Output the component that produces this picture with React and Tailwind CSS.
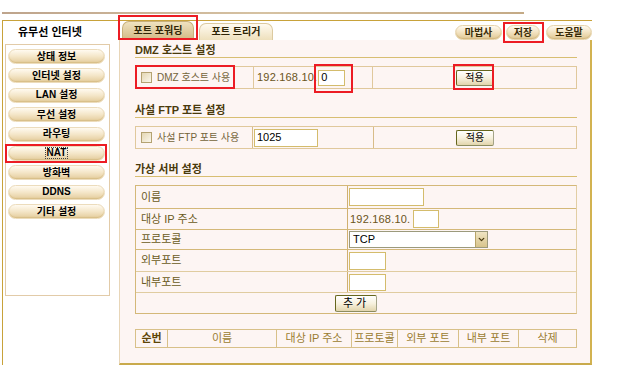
import { ChevronDown } from 'lucide-react'

const MENU = ['상태 정보', '인터넷 설정', 'LAN 설정', '무선 설정', '라우팅', 'NAT', '방화벽', 'DDNS', '기타 설정']

function SideButton({ label, active }) {
  return (
    <div className="h-[15px] w-[97px] ml-[2px] rounded-full border border-[#ecdcbc] bg-gradient-to-b from-[#fffaf0] via-[#f4e6c8] to-[#e4cc9c] shadow-[inset_0_-1px_1px_#d8bf88] flex items-center justify-center text-[10px] font-bold leading-none text-black">
      <span className={active ? 'outline outline-1 outline-dotted outline-[#444] px-px' : ''}>{label}</span>
    </div>
  )
}

function PillButton({ label, className }) {
  return (
    <div className={`h-[15px] rounded-full border border-[#e6d4ac] bg-gradient-to-b from-[#fffaf0] via-[#f2e2c0] to-[#e0c894] shadow-[inset_0_-1px_1px_#d4b980] flex items-center justify-center text-[10px] font-bold leading-none text-[#3a2c08] ${className}`}>
      {label}
    </div>
  )
}

function Check() {
  return <span className="inline-block w-[11px] h-[11px] border border-[#b4a272] bg-gradient-to-br from-[#e4d6b4] to-[#fbf7ec]" />
}

function Btn({ children, className }) {
  return (
    <div className={`flex items-center justify-center rounded-[2px] border border-[#66661c] border-r-[#a4a488] border-b-[#8c8c60] bg-gradient-to-b from-white via-[#f7f1de] to-[#e2d5ac] text-[10px] leading-none text-black ${className}`}>
      {children}
    </div>
  )
}

function TextBox({ value, className }) {
  return (
    <div className={`border border-[#d4bc6c] bg-white text-[11px] leading-none text-black flex items-center pl-[2px] ${className}`}>
      {value}
    </div>
  )
}

function SectionTitle({ children, className }) {
  return (
    <div className={`text-[11px] font-bold leading-[13px] text-[#4a3a0c] border-b border-[#d8be72] ${className}`}>
      {children}
    </div>
  )
}

const HEAD = [
  { label: '순번', w: 'w-[32px]', strong: true },
  { label: '이름', w: 'w-[109px]' },
  { label: '대상 IP 주소', w: 'w-[75px]' },
  { label: '프로토콜', w: 'w-[46px]' },
  { label: '외부 포트', w: 'w-[61px]' },
  { label: '내부 포트', w: 'w-[60px]' },
]

export default function App() {
  return (
    <div className="w-[622px] h-[375px] bg-white relative overflow-hidden font-['Liberation_Sans','Noto_Sans_CJK_KR',sans-serif] text-[10px]">
      {/* top strip */}
      <div className="pt-[12px] pl-[2px]">
        <div className="w-[522px] h-[2px] bg-gradient-to-r from-[#bea48c] via-[#d6c2a2] to-[#c4aa86]" />
      </div>
      <div className="mt-[6px] ml-[2px] w-[590px] h-px bg-[#c8a23a]" />

      <div className="ml-[2px] flex h-[344px] border-l border-[#c8a23a]">
        {/* sidebar */}
        <aside className="w-[116px] flex flex-col">
          <div className="h-[23px] flex items-center pl-[15px] text-[11px] font-bold text-black">유무선 인터넷</div>
          <div className="ml-[2px] w-[105px] h-[252px] border border-[#e2cba8] pt-[4px] flex flex-col gap-[4.4px]">
            {MENU.map(m => (
              <SideButton key={m} label={m} active={m === 'NAT'} />
            ))}
          </div>
        </aside>

        {/* main */}
        <main className="w-[473px] flex flex-col">
          <div className="h-[19px] flex items-end">
            <div className="ml-[3px] w-[72px] h-[19px] rounded-t-[7px] border border-b-0 border-[#c8b07a] bg-gradient-to-b from-[#efe2c0] to-[#d2b984] flex items-center justify-center text-[10px] font-bold text-[#2e2406] leading-none">포트 포워딩</div>
            <div className="ml-[5px] w-[74px] h-[17px] rounded-t-[7px] border border-b-0 border-[#dccaa0] bg-gradient-to-b from-[#fffaf0] to-[#eee0bc] flex items-center justify-center text-[10px] font-bold text-[#2e2406] leading-none">포트 트리거</div>
            <div className="ml-auto flex items-end">
              <PillButton label="마법사" className="w-[47px]" />
              <PillButton label="저장" className="w-[34px] ml-[4px]" />
              <PillButton label="도움말" className="w-[46px] ml-[6px]" />
            </div>
          </div>

          <div className="flex-1 bg-[#fdf5f3] border-l border-[#e8d6b8] border-r-2 border-r-[#d2b250] border-b-2 border-b-[#c9aa4c] pt-[4px] pl-[15px]">
            <div className="w-[442px]">
              {/* DMZ */}
              <SectionTitle>DMZ 호스트 설정</SectionTitle>
              <div className="mt-[8px] h-[23px] flex border border-[#e0c89c]">
                <div className="w-[118px] border-r border-[#e0c89c] flex items-center pl-[5px] gap-[5px] text-[10px] text-[#74643a]">
                  <Check />
                  <span>DMZ 호스트 사용</span>
                </div>
                <div className="w-[119px] border-r border-[#e0c89c] flex items-center pl-[3px] text-[11px] text-[#6a5420]">
                  <span className="tracking-[0.2px]">192.168.10.</span>
                  <TextBox value="0" className="ml-[1px] w-[27px] h-[16px]" />
                </div>
                <div className="flex-1 flex items-center justify-center">
                  <Btn className="w-[38px] h-[16px]">적용</Btn>
                </div>
              </div>

              {/* FTP */}
              <SectionTitle className="mt-[15px]">사설 FTP 포트 설정</SectionTitle>
              <div className="mt-[8px] h-[23px] flex border border-[#e0c89c]">
                <div className="w-[117px] border-r border-[#d8bc88] flex items-center pl-[5px] gap-[5px] text-[10px] text-[#74643a]">
                  <Check />
                  <span>사설 FTP 포트 사용</span>
                </div>
                <div className="w-[121px] border-r border-[#d8bc88] flex items-center pl-px">
                  <TextBox value="1025" className="w-[64px] h-[18px]" />
                </div>
                <div className="flex-1 flex items-center justify-center">
                  <Btn className="w-[38px] h-[16px]">적용</Btn>
                </div>
              </div>

              {/* virtual server */}
              <SectionTitle className="mt-[14px]">가상 서버 설정</SectionTitle>
              <div className="mt-[8px] border border-[#d4b878] border-r-[#e2cea4] text-[11px] text-[#6a5a22]">
                <div className="h-[23px] flex border-b border-[#d4b878]">
                  <div className="w-[212px] border-r border-[#d0b070] flex items-center pl-[5px]">이름</div>
                  <div className="flex items-center pl-px"><TextBox value="" className="w-[75px] h-[18px]" /></div>
                </div>
                <div className="h-[21px] flex border-b border-[#d4b878]">
                  <div className="w-[212px] border-r border-[#d0b070] flex items-center pl-[5px]">대상 IP 주소</div>
                  <div className="flex items-center pl-[2px] text-[#6a5420]">
                    <span className="tracking-[0.2px]">192.168.10.</span>
                    <TextBox value="" className="ml-[3px] w-[26px] h-[18px]" />
                  </div>
                </div>
                <div className="h-[20px] flex border-b border-[#d4b878]">
                  <div className="w-[212px] border-r border-[#d0b070] flex items-center pl-[5px]">프로토콜</div>
                  <div className="flex items-center pl-px">
                    <div className="w-[139px] h-[17px] border border-[#9c9a7c] bg-white flex items-center">
                      <span className="flex-1 pl-[3px] text-[11px] text-black leading-none">TCP</span>
                      <span className="w-[12px] h-[15px] bg-gradient-to-b from-[#efe4c2] to-[#d8c48c] border-l border-[#b8a468] flex items-center justify-center">
                        <ChevronDown size={9} strokeWidth={3.5} className="text-[#4a3a10]" />
                      </span>
                    </div>
                  </div>
                </div>
                <div className="h-[22px] flex border-b border-[#e0cca0]">
                  <div className="w-[212px] border-r border-[#d0b070] flex items-center pl-[5px]">외부포트</div>
                  <div className="flex items-center pl-px"><TextBox value="" className="w-[37px] h-[18px]" /></div>
                </div>
                <div className="h-[21px] flex border-b border-[#e0cca0]">
                  <div className="w-[212px] border-r border-[#d0b070] flex items-center pl-[5px]">내부포트</div>
                  <div className="flex items-center pl-px"><TextBox value="" className="w-[37px] h-[17px]" /></div>
                </div>
                <div className="h-[20px] flex items-center justify-center">
                  <Btn className="w-[42px] h-[17px] tracking-[3px] text-[11px]">추가</Btn>
                </div>
              </div>

              {/* list header */}
              <div className="mt-[15px] h-[19px] flex border border-[#d8c088] text-[11px] text-[#9a7c30]">
                {HEAD.map(h => (
                  <div key={h.label} className={`${h.w} border-r border-[#d8c088] flex items-center justify-center ${h.strong ? 'text-[#5e4608] font-bold' : ''}`}>
                    {h.label}
                  </div>
                ))}
                <div className="flex-1 flex items-center justify-center">삭제</div>
              </div>
            </div>
          </div>
        </main>
      </div>

      {/* red highlight boxes */}
      <div className="absolute left-[118px] top-[15px] w-[80px] h-[25px] border-2 border-[#ec1c24]" />
      <div className="absolute left-[5px] top-[144px] w-[102px] h-[19px] border-2 border-[#ec1c24]" />
      <div className="absolute left-[135px] top-[65px] w-[100px] h-[24px] border-2 border-[#ec1c24]" />
      <div className="absolute left-[314px] top-[64px] w-[39px] h-[29px] border-2 border-[#ec1c24]" />
      <div className="absolute left-[453px] top-[64px] w-[41px] h-[26px] border-2 border-[#ec1c24]" />
      <div className="absolute left-[503px] top-[22px] w-[41px] h-[21px] border-2 border-[#ec1c24]" />
    </div>
  )
}
